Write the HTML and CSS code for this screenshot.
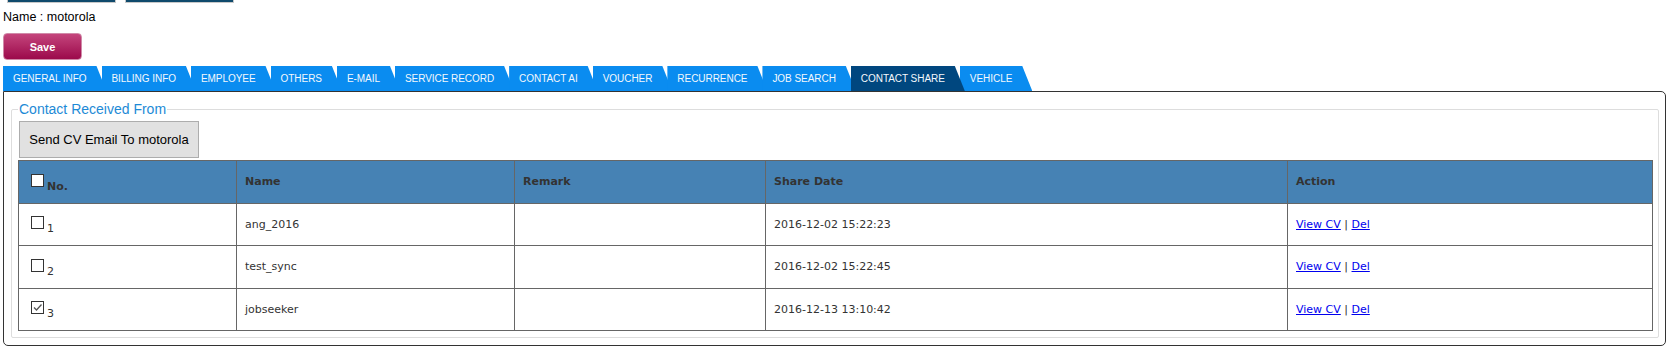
FILE: index.html
```html
<!DOCTYPE html>
<html lang="en">
<head>
    <meta charset="UTF-8">
    <meta name="viewport" content="width=device-width, initial-scale=1.0">
    <title>Company Profile - Contact Share</title>
    <link rel="stylesheet" href="styles.css">
</head>
<body>
    <div class="top-actions">
        <span class="top-btn"></span>
        <span class="top-btn"></span>
    </div>
    <div class="company-name">Name : motorola</div>
    <button type="button" class="btn-save">Save</button>

    <ul class="tabs">
        <li><a href="#">GENERAL INFO</a></li>
        <li><a href="#">BILLING INFO</a></li>
        <li><a href="#">EMPLOYEE</a></li>
        <li><a href="#">OTHERS</a></li>
        <li><a href="#">E-MAIL</a></li>
        <li><a href="#">SERVICE RECORD</a></li>
        <li><a href="#">CONTACT AI</a></li>
        <li><a href="#">VOUCHER</a></li>
        <li><a href="#">RECURRENCE</a></li>
        <li><a href="#">JOB SEARCH</a></li>
        <li class="active"><a href="#">CONTACT SHARE</a></li>
        <li><a href="#">VEHICLE</a></li>
    </ul>

    <div class="tab-panel">
        <fieldset class="share-box">
            <legend>Contact Received From</legend>
            <button type="button" class="btn-send">Send CV Email To motorola</button>
            <table class="grid">
                <colgroup>
                    <col class="col-no">
                    <col class="col-name">
                    <col class="col-remark">
                    <col class="col-date">
                    <col>
                </colgroup>
                <thead>
                    <tr>
                        <th><input type="checkbox">No.</th>
                        <th>Name</th>
                        <th>Remark</th>
                        <th>Share Date</th>
                        <th>Action</th>
                    </tr>
                </thead>
                <tbody>
                    <tr>
                        <td><input type="checkbox">1</td>
                        <td>ang_2016</td>
                        <td></td>
                        <td>2016-12-02 15:22:23</td>
                        <td><a href="#">View CV</a> | <a href="#">Del</a></td>
                    </tr>
                    <tr>
                        <td><input type="checkbox">2</td>
                        <td>test_sync</td>
                        <td></td>
                        <td>2016-12-02 15:22:45</td>
                        <td><a href="#">View CV</a> | <a href="#">Del</a></td>
                    </tr>
                    <tr>
                        <td><input type="checkbox" checked>3</td>
                        <td>jobseeker</td>
                        <td></td>
                        <td>2016-12-13 13:10:42</td>
                        <td><a href="#">View CV</a> | <a href="#">Del</a></td>
                    </tr>
                </tbody>
            </table>
        </fieldset>
    </div>
</body>
</html>
```

FILE: styles.css
```css
body { margin: 0; font-family: "Liberation Sans", Arial, sans-serif; font-size: 12px; color: #000; background: #fff; }

.top-actions { display: flex; gap: 9px; padding-left: 7px; }
.top-btn { width: 107px; height: 2px; background: #0f4a6c; border: 1px solid #c8c8c8; border-top: 0; }

.company-name { margin: 7px 0 0 3px; font-size: 12.5px; line-height: 15px; }

.btn-save { display: block; margin: 8px 0 0 3px; width: 79px; height: 27px; padding: 0; border: 1px solid #d08aa8; border-radius: 4px; background: linear-gradient(#c4457c, #9c0a4b); color: #fff; font-family: "Liberation Sans", Arial, sans-serif; font-size: 11px; font-weight: bold; }

.tabs { display: flex; list-style: none; margin: 6px 0 0 3px; padding: 0; }
.tabs li { margin-right: -5px; }
.tabs a { display: block; height: 25px; line-height: 25px; padding: 0 20px 0 10px; background: #0a8cf0; color: #f4f8fc; font-size: 10px; letter-spacing: -0.05px; text-decoration: none; clip-path: polygon(0 0, calc(100% - 10px) 0, 100% 100%, 0 100%); }
.tabs li.active { position: relative; z-index: 1; }
.tabs li.active a { background: #00477f; }

.tab-panel { margin-left: 3px; padding: 9px 6px 7px 7px; border: 1px solid #333; border-radius: 0 5px 5px 5px; }

.share-box { margin: 0; padding: 0 5px 6px 6px; border: 1px solid #ddd; border-radius: 2px; }
.share-box legend { padding: 0 1px; color: #1d8ad6; font-size: 14px; line-height: 16px; }

.btn-send { display: block; margin: 4px 0 2px 1px; width: 180px; height: 37px; padding: 0; background: #e1e1e1; border: 1px solid #adadad; color: #000; font-family: "Liberation Sans", Arial, sans-serif; font-size: 13px; }

.grid { width: 100%; border-collapse: collapse; border: 1px solid #666; font-family: "DejaVu Sans", Verdana, sans-serif; font-size: 11px; color: #333; }
.grid .col-no { width: 218px; }
.grid .col-name { width: 278px; }
.grid .col-remark { width: 251px; }
.grid .col-date { width: 522px; }
.grid tr { height: 42.5px; }
.grid th, .grid td { padding: 0 8px; border: 1px solid #666; text-align: left; vertical-align: middle; }
.grid th { background: #4682b4; color: #333; font-weight: bold; }
.grid a { color: #0000ee; }

.grid input[type=checkbox] { appearance: none; width: 13px; height: 13px; margin: 3px 3px 3px 4px; border: 1px solid #333; background: #fff; vertical-align: baseline; }
.grid input[type=checkbox]:checked { background: #fff url("data:image/svg+xml,%3Csvg xmlns='http://www.w3.org/2000/svg' width='11' height='11'%3E%3Cpath d='M2 5.5l2.5 2.5L9.5 2.5' fill='none' stroke='%23555' stroke-width='1.3'/%3E%3C/svg%3E") center no-repeat; }
```
